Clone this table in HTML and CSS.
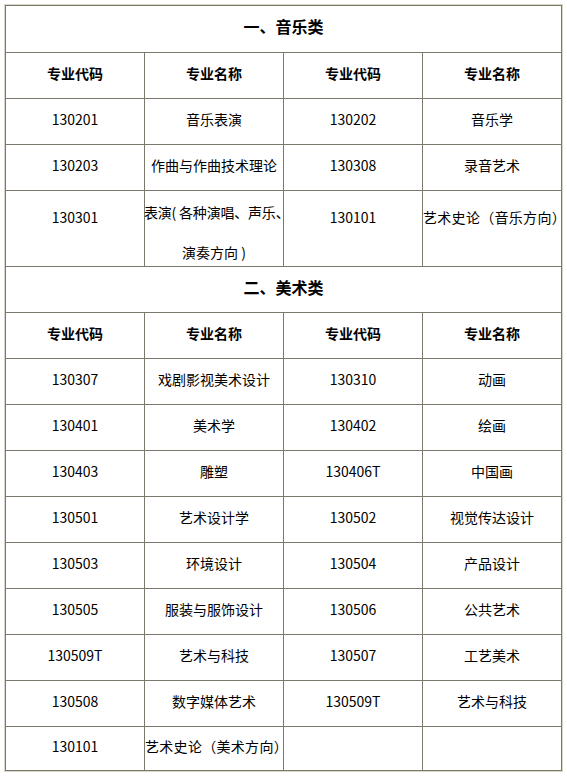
FILE: index.html
```html
<!DOCTYPE html>
<html lang="zh">
<head>
<meta charset="utf-8">
<link rel="stylesheet" href="styles.css">
</head>
<body>
<div class="frame">
<table class="majors">
<tr class="sec"><td colspan="4">一、音乐类</td></tr>
<tr class="head"><td>专业代码</td><td>专业名称</td><td>专业代码</td><td>专业名称</td></tr>
<tr><td>130201</td><td>音乐表演</td><td>130202</td><td>音乐学</td></tr>
<tr><td>130203</td><td>作曲与作曲技术理论</td><td>130308</td><td>录音艺术</td></tr>
<tr class="tall"><td class="up">130301</td><td class="multi"><div class="wrap"><span class="l1">表演( 各种演唱、声乐、</span><br>演奏方向 )</div></td><td class="up">130101</td><td class="up left">艺术史论（音乐方向）</td></tr>
<tr class="sec"><td colspan="4">二、美术类</td></tr>
<tr class="head"><td>专业代码</td><td>专业名称</td><td>专业代码</td><td>专业名称</td></tr>
<tr><td>130307</td><td>戏剧影视美术设计</td><td>130310</td><td>动画</td></tr>
<tr><td>130401</td><td>美术学</td><td>130402</td><td>绘画</td></tr>
<tr><td>130403</td><td>雕塑</td><td>130406T</td><td>中国画</td></tr>
<tr><td>130501</td><td>艺术设计学</td><td>130502</td><td>视觉传达设计</td></tr>
<tr><td>130503</td><td>环境设计</td><td>130504</td><td>产品设计</td></tr>
<tr><td>130505</td><td>服装与服饰设计</td><td>130506</td><td>公共艺术</td></tr>
<tr><td>130509T</td><td>艺术与科技</td><td>130507</td><td>工艺美术</td></tr>
<tr><td>130508</td><td>数字媒体艺术</td><td>130509T</td><td>艺术与科技</td></tr>
<tr class="last"><td>130101</td><td class="left">艺术史论（美术方向）</td><td></td><td></td></tr>
</table>
</div>
</body>
</html>
```

FILE: styles.css
```css
html, body {
  margin: 0;
  padding: 0;
  background: #ffffff;
}
body {
  padding: 4px 0 0 4px;
  font-family: "Noto Sans CJK SC", "Noto Sans", sans-serif;
  font-size: 14px;
  color: #000000;
}
.frame {
  width: 557px;
  border: 1px solid #d8d4c6;
}
.majors {
  width: 557px;
  table-layout: fixed;
  border-collapse: collapse;
}
.majors td {
  border: 1px solid #7c786c;
  padding: 0 0 6px 0;
  text-align: center;
  vertical-align: middle;
  line-height: 20px;
  height: 45px;
  box-sizing: border-box;
}
.majors tr {
  height: 46px;
}
.majors tr.sec:first-child td {
  height: 47px;
}
.majors .sec td {
  font-size: 16px;
  font-weight: bold;
}
.majors .head td {
  font-weight: bold;
}
.majors tr.tall td {
  height: 76px;
}
.majors td.up {
  padding-bottom: 24px;
}
.majors td.left {
  text-align: left;
  white-space: nowrap;
  letter-spacing: 0.3px;
}
.majors td.multi {
  vertical-align: top;
  padding-bottom: 0;
}
.wrap {
  height: 75px;
  padding-top: 1px;
  line-height: 40px;
  box-sizing: border-box;
  white-space: nowrap;
}
.l1 {
  display: inline-block;
  margin-left: -1px;
  letter-spacing: -0.2px;
}
.majors tr.last {
  height: 44px;
}
.majors tr.last td {
  height: 44px;
}
```
